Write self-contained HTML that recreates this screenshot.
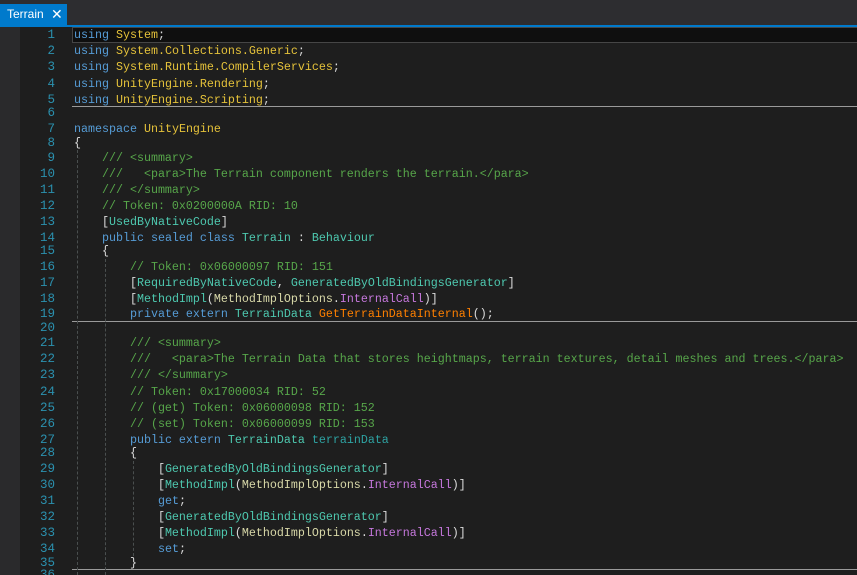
<!DOCTYPE html>
<html style="overflow:hidden;height:575px"><head><meta charset="utf-8"><style>
html,body{margin:0;width:857px;height:575px;overflow:hidden}
body{background:#1e1e1e;position:relative;font-family:"Liberation Mono",monospace;font-size:11.67px}
#top{position:absolute;left:0;top:0;width:857px;height:25px;background:#2d2d30}
#tab{position:absolute;left:0;top:4px;width:67px;height:23px;background:#007acc;color:#fff;font-family:"Liberation Sans",sans-serif;font-size:12px;line-height:21px}
#blue{position:absolute;left:0;top:25px;width:857px;height:2px;background:#007acc}
#gut{position:absolute;left:0;top:27px;width:20px;height:548px;background:#2a2a2c}
#cur{position:absolute;left:72px;top:27px;width:790px;height:14px;background:#0f0f0f;border:1px solid #464646}
.sep{position:absolute;left:72px;width:785px;height:1px;background:#9a9a9a}
.n{position:absolute;left:20px;width:35px;text-align:right;color:#2b91af;line-height:16px;height:16px;white-space:pre;font-size:12.5px}
.l{position:absolute;left:74px;color:#dcdcdc;line-height:16px;height:16px;white-space:pre}
.g{position:absolute;width:0;border-left:1px dashed #4a4f4f}
.k{color:#569cd6}.y{color:#e5c23a}.t{color:#4ec9b0}.c{color:#57a64a}.o{color:#ff8000}.p{color:#c678dd}.b{color:#d8d8a8}.d{color:#2ea3a3}
</style></head><body>
<div id="top"></div>
<div id="tab"><span style="position:absolute;left:7px">Terrain</span><span style="position:absolute;left:51px;font-size:14px">✕</span></div>
<div id="blue"></div>
<div id="gut"></div>
<div id="cur"></div>
<div class="sep" style="top:106px"></div>
<div class="sep" style="top:321px"></div>
<div class="sep" style="top:569px"></div>
<div class="g" style="left:77px;top:150px;height:425px"></div>
<div class="g" style="left:105px;top:259px;height:316px"></div>
<div class="g" style="left:133px;top:461px;height:95px"></div>

<div class="n" style="top:27px">1</div><div class="l" style="top:27px"><span class="k">using</span> <span class="y">System</span>;</div>
<div class="n" style="top:43px">2</div><div class="l" style="top:43px"><span class="k">using</span> <span class="y">System.Collections.Generic</span>;</div>
<div class="n" style="top:59px">3</div><div class="l" style="top:59px"><span class="k">using</span> <span class="y">System.Runtime.CompilerServices</span>;</div>
<div class="n" style="top:76px">4</div><div class="l" style="top:76px"><span class="k">using</span> <span class="y">UnityEngine.Rendering</span>;</div>
<div class="n" style="top:92px">5</div><div class="l" style="top:92px"><span class="k">using</span> <span class="y">UnityEngine.Scripting</span>;</div>
<div class="n" style="top:105px">6</div>
<div class="n" style="top:121px">7</div><div class="l" style="top:121px"><span class="k">namespace</span> <span class="y">UnityEngine</span></div>
<div class="n" style="top:135px">8</div><div class="l" style="top:135px">{</div>
<div class="n" style="top:150px">9</div><div class="l c" style="top:150px">    /// &lt;summary&gt;</div>
<div class="n" style="top:166px">10</div><div class="l c" style="top:166px">    ///   &lt;para&gt;The Terrain component renders the terrain.&lt;/para&gt;</div>
<div class="n" style="top:182px">11</div><div class="l c" style="top:182px">    /// &lt;/summary&gt;</div>
<div class="n" style="top:198px">12</div><div class="l c" style="top:198px">    // Token: 0x0200000A RID: 10</div>
<div class="n" style="top:214px">13</div><div class="l" style="top:214px">    [<span class="t">UsedByNativeCode</span>]</div>
<div class="n" style="top:230px">14</div><div class="l" style="top:230px">    <span class="k">public sealed class</span> <span class="t">Terrain</span> : <span class="t">Behaviour</span></div>
<div class="n" style="top:243px">15</div><div class="l" style="top:243px">    {</div>
<div class="n" style="top:259px">16</div><div class="l c" style="top:259px">        // Token: 0x06000097 RID: 151</div>
<div class="n" style="top:275px">17</div><div class="l" style="top:275px">        [<span class="t">RequiredByNativeCode</span>, <span class="t">GeneratedByOldBindingsGenerator</span>]</div>
<div class="n" style="top:291px">18</div><div class="l" style="top:291px">        [<span class="t">MethodImpl</span>(<span class="b">MethodImplOptions</span>.<span class="p">InternalCall</span>)]</div>
<div class="n" style="top:306px">19</div><div class="l" style="top:306px">        <span class="k">private extern</span> <span class="t">TerrainData</span> <span class="o">GetTerrainDataInternal</span>();</div>
<div class="n" style="top:320px">20</div>
<div class="n" style="top:335px">21</div><div class="l c" style="top:335px">        /// &lt;summary&gt;</div>
<div class="n" style="top:351px">22</div><div class="l c" style="top:351px">        ///   &lt;para&gt;The Terrain Data that stores heightmaps, terrain textures, detail meshes and trees.&lt;/para&gt;</div>
<div class="n" style="top:367px">23</div><div class="l c" style="top:367px">        /// &lt;/summary&gt;</div>
<div class="n" style="top:384px">24</div><div class="l c" style="top:384px">        // Token: 0x17000034 RID: 52</div>
<div class="n" style="top:400px">25</div><div class="l c" style="top:400px">        // (get) Token: 0x06000098 RID: 152</div>
<div class="n" style="top:416px">26</div><div class="l c" style="top:416px">        // (set) Token: 0x06000099 RID: 153</div>
<div class="n" style="top:432px">27</div><div class="l" style="top:432px">        <span class="k">public extern</span> <span class="t">TerrainData</span> <span class="d">terrainData</span></div>
<div class="n" style="top:445px">28</div><div class="l" style="top:445px">        {</div>
<div class="n" style="top:461px">29</div><div class="l" style="top:461px">            [<span class="t">GeneratedByOldBindingsGenerator</span>]</div>
<div class="n" style="top:477px">30</div><div class="l" style="top:477px">            [<span class="t">MethodImpl</span>(<span class="b">MethodImplOptions</span>.<span class="p">InternalCall</span>)]</div>
<div class="n" style="top:493px">31</div><div class="l" style="top:493px">            <span class="k">get</span>;</div>
<div class="n" style="top:509px">32</div><div class="l" style="top:509px">            [<span class="t">GeneratedByOldBindingsGenerator</span>]</div>
<div class="n" style="top:525px">33</div><div class="l" style="top:525px">            [<span class="t">MethodImpl</span>(<span class="b">MethodImplOptions</span>.<span class="p">InternalCall</span>)]</div>
<div class="n" style="top:541px">34</div><div class="l" style="top:541px">            <span class="k">set</span>;</div>
<div class="n" style="top:555px">35</div><div class="l" style="top:555px">        }</div>
<div class="n" style="top:567px;height:8px;overflow:hidden">36</div>
</body></html>
